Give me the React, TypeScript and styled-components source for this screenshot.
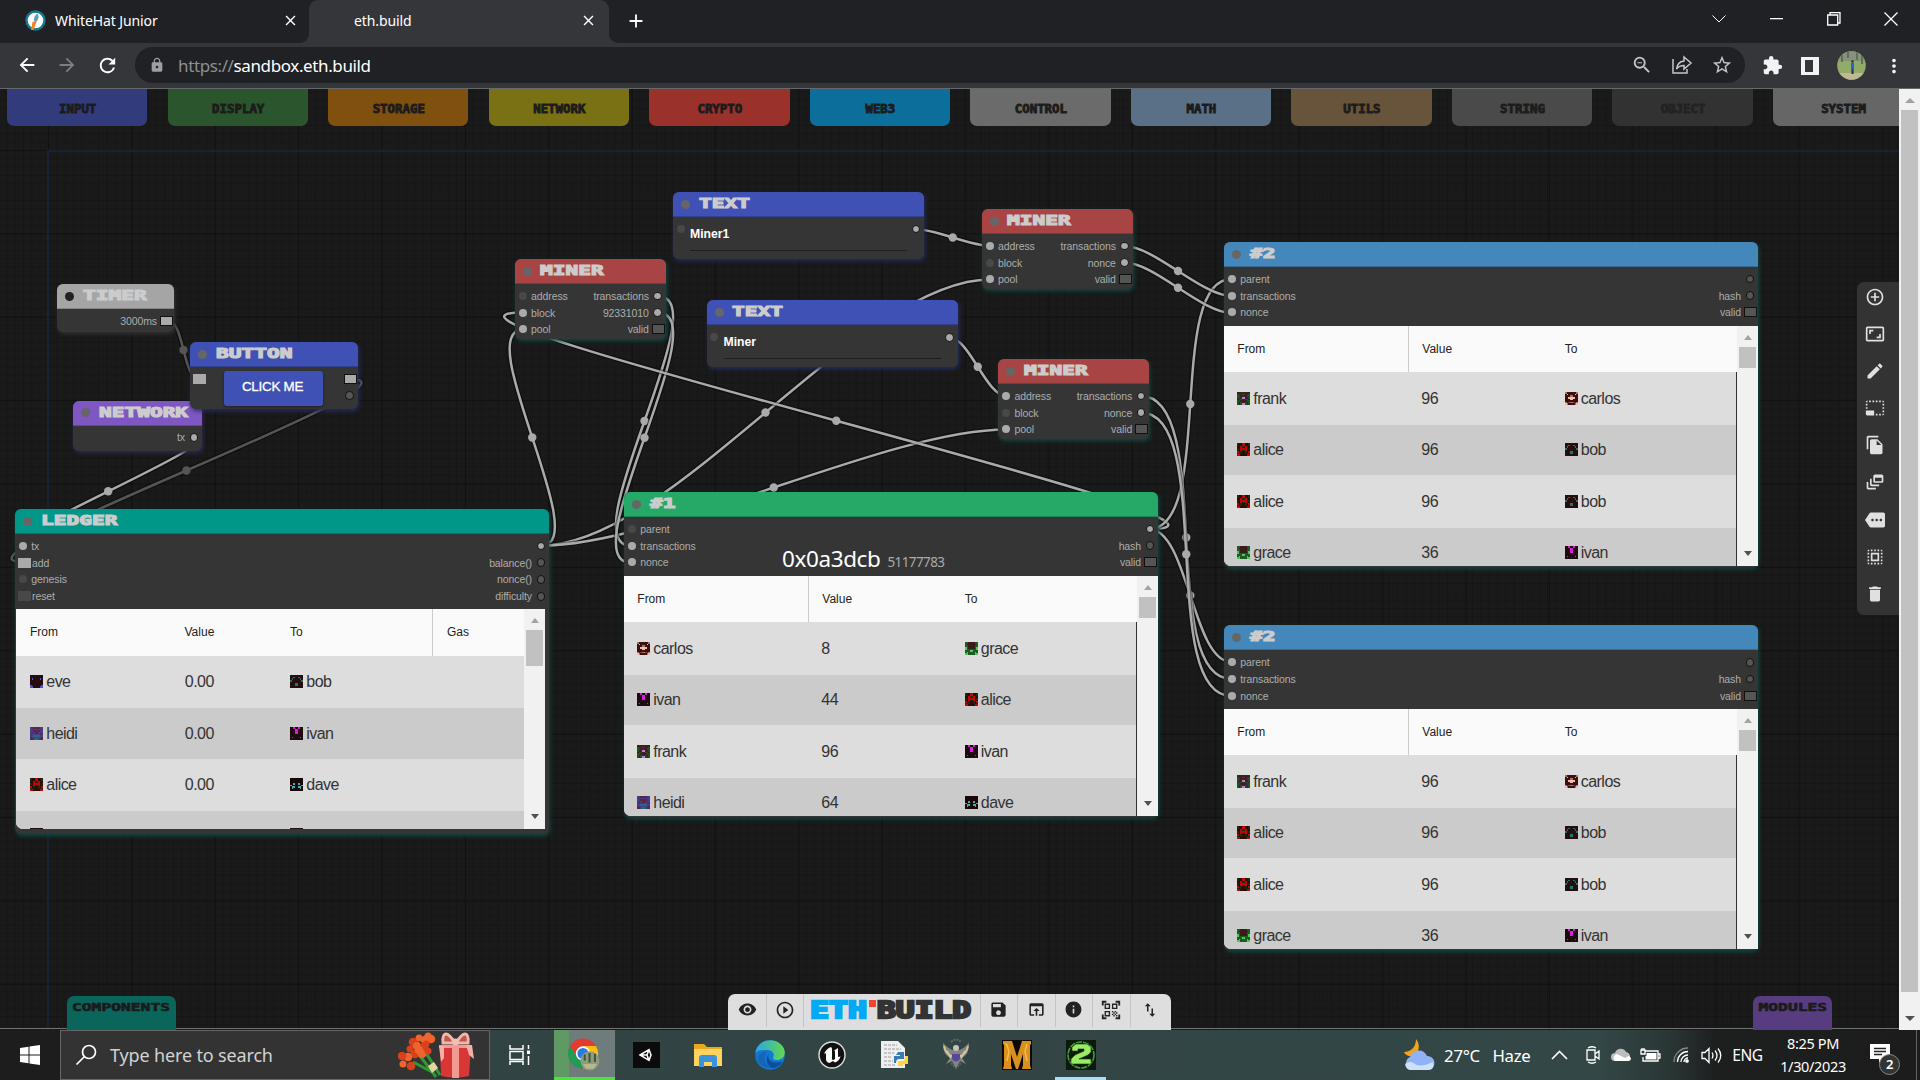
import React from "react";
import styled, { createGlobalStyle } from "styled-components";
import {
  MdAddCircleOutline, MdAspectRatio, MdEdit, MdPhotoSizeSelectSmall, MdFileCopy, MdDynamicFeed,
  MdMore, MdSelectAll, MdDelete, MdRemoveRedEye, MdPlayCircleOutline, MdSave, MdOpenInBrowser,
  MdInfo, MdQrCodeScanner, MdImportExport, MdLock, MdExtension, MdStarOutline, MdRefresh,
  MdArrowBack, MdArrowForward, MdMoreVert, MdClose, MdAdd, MdZoomOut,
} from "react-icons/md";

const Global = createGlobalStyle`
  html, body { margin: 0; padding: 0; background: #1a1a1a; overflow: hidden; }
  * { box-sizing: border-box; }
  svg { display: block; flex: none; }
`;

const ui = `"Noto Sans", "Open Sans", sans-serif`;
const arial = `"Liberation Sans", Arial, sans-serif`;
const mono = `"DejaVu Sans Mono", monospace`;

const Screen = styled.div`
  width: 1920px; height: 1080px; display: grid; grid-template-rows: 89px 941px 50px;
  overflow: hidden; font-family: ${ui}; color: #fff;
`;

/* ---------- browser frame ---------- */
const Browser = styled.header`
  display: grid; grid-template-rows: 43px 45px; background: #35363a; border-bottom: 1px solid #66686b;
`;
const TabStrip = styled.div`display: flex; background: #35363a; height: 43px;`;
const Tab = styled.div<{ $active?: boolean }>`
  width: ${p => (p.$active ? 300 : 309)}px; height: 43px; display: flex; align-items: center;
  padding: 0 ${p => (p.$active ? 12 : 10)}px 2px ${p => (p.$active ? 36 : 25)}px;
  background: ${p => (p.$active ? "#35363a" : "#202124")};
  border-radius: ${p => (p.$active ? "9px 9px 0 0" : "0 0 9px 0")};
  font-size: 14px; letter-spacing: -0.1px;
`;
const ActiveBack = styled.div`background: linear-gradient(#202124 50%, #35363a 50%); display: flex;`;
const TabTitle = styled.span`flex: 1; margin-left: 9px; white-space: nowrap;`;
const StripEnd = styled.div`
  flex: 1; display: flex; padding: 10px 0 0 16px; border-radius: 0 0 0 9px; background: #202124;
`;
const WindowButtons = styled.div`
  margin-left: auto; display: flex; margin-top: -10px; height: 37px; padding-right: 1px;
`;
const WinBtn = styled.div`width: 57.5px; display: grid; place-items: center;`;
const Toolbar = styled.div`display: flex; align-items: center; padding: 0 16px 0 16px;`;
const NavGroup = styled.div`display: flex; gap: 18px; width: 119px;`;
const Omnibox = styled.div`
  width: 1610px; height: 36px; border-radius: 18px; background: #202124; display: flex;
  align-items: center; padding: 0 12px 0 14px; margin-top: -1px; font-size: 17px; color: #fff;
`;
const Url = styled.span`margin-left: 13px; letter-spacing: -0.38px; i { font-style: normal; color: #8c8f93; }`;
const OmniIcons = styled.div`margin-left: auto; display: flex; gap: 18px; color: #c3c6ca;`;
const ExtIcons = styled.div`display: flex; align-items: center; gap: 17px; margin-left: 17px; color: #f1f3f4;`;

/* ---------- page ---------- */
const Viewport = styled.main`display: grid; grid-template-columns: 1899px 21px; height: 941px;`;
const Board = styled.div`
  position: relative; overflow: hidden; background-color: #1a1a1a;
  background-image:
    linear-gradient(90deg, #111 1.4px, transparent 1.4px), linear-gradient(#111 1.4px, transparent 1.4px),
    linear-gradient(90deg, #161616 1px, transparent 1px), linear-gradient(#161616 1px, transparent 1px);
  background-size: 83.4px 83.4px, 83.4px 83.4px, 8.34px 8.34px, 8.34px 8.34px;
  background-position: 48px 61px;
`;
const Frame = styled.div`
  position: absolute; left: 47px; top: 61px; right: 0; bottom: 0;
  border-left: 2px solid #1b253f; border-top: 2px solid #1b253f; opacity: .8;
`;
const Categories = styled.nav`
  position: absolute; left: 7px; top: 0; display: flex; gap: 20.15px;
`;
const Category = styled.div<{ $c: string; $dim?: boolean }>`
  width: 140.4px; height: 37px; flex: none; border-radius: 0 0 7px 7px; background: ${p => p.$c};
  display: grid; place-items: center; padding: 2px 0 0 1px;
  color: ${p => (p.$dim ? "#222" : "#1c1c1c")}; font: 700 12.4px ${mono};
  -webkit-text-stroke: 0.9px ${p => (p.$dim ? "#222" : "#1c1c1c")};
`;
const Wires = styled.svg`position: absolute; left: 0; top: 0;`;

const NodeBox = styled.section<{ $x: number; $y: number; $w: number; $h: number; $glow: string }>`
  position: absolute; left: ${p => p.$x}px; top: ${p => p.$y - 89}px; width: ${p => p.$w}px; height: ${p => p.$h}px;
  background: #353535; border-radius: 6px; box-shadow: 1px 2px 4px ${p => p.$glow}; font-family: ${arial};
`;
const NodeHead = styled.div<{ $c: string }>`
  height: 25px; background: ${p => p.$c}; border-radius: 6px 6px 0 0; display: flex; align-items: center;
  padding-left: 8px; border-bottom: 1px solid rgba(0,0,0,.2);
`;
const HeadDot = styled.i<{ $c?: string }>`width: 9px; height: 9px; border-radius: 50%; background: ${p => p.$c || "#666"};`;
const NodeTitle = styled.b`
  margin-left: 8.5px; margin-top: -2px; font: 700 14px/22px ${mono}; color: #ccc; transform: scaleX(1.51); transform-origin: 0 50%;
  -webkit-text-stroke: 1.15px #ccc; white-space: nowrap;
`;
const Ports = styled.div<{ $h?: number }>`
  display: flex; justify-content: space-between; padding-top: 3.5px; height: ${p => (p.$h ? p.$h + "px" : "auto")};
`;
const PortCol = styled.div<{ $right?: boolean }>`
  display: flex; flex-direction: column; align-items: ${p => (p.$right ? "flex-end" : "flex-start")};
`;
const Port = styled.div<{ $right?: boolean; $box?: boolean }>`
  height: 16.8px; display: flex; align-items: center; flex-direction: ${p => (p.$right ? "row-reverse" : "row")};
  gap: ${p => (p.$box ? (p.$right ? 3 : 1) : 4.5)}px;
  padding: 0 ${p => (p.$right ? (p.$box ? 1 : 4) : 0)}px 0 ${p => (p.$right ? 0 : p.$box ? 3 : 3.8)}px;
  font-size: 10.5px; letter-spacing: -0.1px; color: #adadad; white-space: nowrap;
`;
const Pin = styled.i<{ $on?: boolean; $box?: boolean; $right?: boolean }>`
  width: ${p => (p.$box ? 13 : p.$right ? 8.5 : 8)}px; height: ${p => (p.$box ? 10 : p.$right ? 8.5 : 8)}px;
  border-radius: ${p => (p.$box ? 0 : "50%")}; flex: none;
  background: ${p => (p.$on ? "#aaa" : p.$right ? "#555" : "#484848")};
  border: ${p => (p.$right ? "1.5px solid #111" : "none")};
`;

const TableWrap = styled.div<{ $h: number; $l?: number; $w: number }>`
  height: ${p => p.$h}px; width: ${p => p.$w}px; margin-left: ${p => p.$l || 0}px; display: grid;
  grid-template-columns: 1fr 21px; overflow: hidden; border-radius: 0 0 0 7px; background: #f1f1f1;
`;
const TableBody = styled.div`overflow: hidden; color: #333;`;
const HeadRow = styled.div<{ $cols: string; $h: number }>`
  display: grid; grid-template-columns: ${p => p.$cols}; height: ${p => p.$h}px; background: #fafafa;
  font-size: 12px; color: #222; line-height: ${p => p.$h}px;
`;
const HeadCell = styled.div<{ $line?: boolean; $edge?: boolean }>`
  padding-left: ${p => (p.$edge ? 13.3 : 14)}px; border-left: ${p => (p.$line ? "1px solid #ccc" : "none")};
`;
const Row = styled.div<{ $cols: string; $h: number; $odd: boolean; $edge: boolean }>`
  display: grid; grid-template-columns: ${p => p.$cols}; height: ${p => p.$h}px; align-items: center;
  background: ${p => (p.$odd ? "#cbcbcb" : "#ddd")}; font-size: 16px; letter-spacing: -0.55px; color: #333;
  border-right: ${p => (p.$edge ? "1px solid #333" : "none")};
`;
const Cell = styled.div<{ $edge?: boolean }>`
  padding-left: ${p => (p.$edge ? 13.3 : 14.3)}px; display: flex; align-items: center; gap: 3px;
  svg { margin-top: -1px; }
`;
const Scroll = styled.div<{ $thumb: number }>`
  background: #f1f1f1; display: flex; flex-direction: column; align-items: center; padding: 9px 0 10px;
  &::before { content: ""; border: 4.5px solid transparent; border-top: 0; border-bottom: 5px solid #a3a3a3; }
  &::after { content: ""; border: 4.5px solid transparent; border-bottom: 0; border-top: 5px solid #505050; margin-top: auto; }
  i { width: 17px; height: ${p => p.$thumb}px; background: #c1c1c1; margin-top: 7px; }
`;
const HashLabel = styled.div`
  position: absolute; left: 158px; top: 50px; display: flex; align-items: baseline; gap: 7px; font-family: ${ui};
  font-size: 22.5px; letter-spacing: -0.4px; color: #fff; line-height: 34px; white-space: nowrap;
  small { font-size: 13.5px; color: #aaa; letter-spacing: -0.6px; }
`;
const TextField = styled.div`
  position: absolute; left: 17px; top: 31px; width: 217px; height: 28px; border-bottom: 1.5px solid #1f1f1f;
  color: #fff; font: 700 12.2px/22px ${arial};
`;
const ClickButton = styled.button`
  position: absolute; left: 34px; top: 29px; width: 99px; height: 35px; border: 0; border-radius: 3px; background: #3f51b5;
  color: #fff; font: 500 13.4px ${arial}; letter-spacing: -0.25px; padding: 0 2px 5px 0; -webkit-text-stroke: .3px #fff; box-shadow: 0 1px 3px #0006;
`;
const ToolRail = styled.aside`
  position: absolute; right: 0; top: 193px; width: 42px; height: 333px; background: #333; border-radius: 7px 0 0 7px;
  display: flex; flex-direction: column; align-items: center; padding: 5px 7px 0 0; gap: 17.1px; color: #e0e0e0; font-size: 20px;
`;
const BottomTab = styled.div<{ $l: number; $w: number; $c: string }>`
  position: absolute; left: ${p => p.$l}px; bottom: 0; width: ${p => p.$w}px; height: 34px; background: ${p => p.$c};
  border-radius: 7px 7px 0 0; font: 700 11.3px/24px ${mono}; display: flex; justify-content: center; color: #1b1b1b;
  -webkit-text-stroke: .6px #1b1b1b; span { display: block; transform: scaleX(1.44); }
`;
const Edge = styled.div`position: absolute; left: 0; right: 0; bottom: 1px; height: 1px; background: #727272;`;
const Dock = styled.div`
  position: absolute; left: 728px; bottom: 0; width: 443px; height: 36px; background: #dedede;
  border-radius: 7px 7px 0 0; display: flex; color: #222; font-size: 19px;
`;
const DockItem = styled.div<{ $w: number }>`
  width: ${p => p.$w}px; height: 33px; display: grid; place-items: center; padding-bottom: 2px;
  & + & { border-left: 1px solid #c4c4c4; }
`;
const Logo = styled.div`
  width: 163px; height: 25px; display: flex; justify-content: flex-start; font: 700 23px/25px ${mono}; margin-top: 1px;
  span { display: inline-block; width: 57.5px; color: #03a9f4; -webkit-text-stroke: 2.3px #03a9f4; transform: scaleX(1.37); transform-origin: 0 0; }
  i { width: 7px; height: 7px; background: #f44336; margin: 2px 1px 0 1px; position: relative; z-index: 1; }
  b { width: 93px; color: #333; -webkit-text-stroke: 2.3px #333; transform: scaleX(1.36); transform-origin: 0 0; }
`;
const PageScroll = styled.div`
  background: #f1f1f1; display: flex; flex-direction: column; align-items: center; padding: 9px 0 9px; width: 21px;
  &::before { content: ""; border: 5px solid transparent; border-top: 0; border-bottom: 5px solid #a0a0a0; }
  &::after { content: ""; border: 5px solid transparent; border-bottom: 0; border-top: 5px solid #505050; margin-top: auto; }
  i { width: 17px; height: 882px; background: #c1c1c1; margin-top: 7px; }
`;

/* ---------- taskbar ---------- */
const Taskbar = styled.footer`
  height: 50px; display: flex; background: linear-gradient(90deg, #1d1d1d 60px, #314443 490px, #334746 1600px, #2a3635 1670px, #1d1f1f 1715px, #1c1c1c);
`;
const Start = styled.div`width: 60px; display: grid; place-items: center;`;
const SearchBox = styled.div`
  width: 430px; border: 1px solid #666; background: #333; display: flex; align-items: center; padding-left: 14px;
  font-size: 18px; color: #d2d2d2; span { margin-left: 13px; width: 288px; white-space: nowrap; letter-spacing: -0.15px; }
`;
const TaskItem = styled.div<{ $w: number; $bar?: string; $bg?: string }>`
  width: ${p => p.$w}px; display: grid; place-items: center; background: ${p => p.$bg || "none"};
  box-shadow: ${p => (p.$bar ? `inset 0 -3px ${p.$bar}` : "none")};
`;
const Tray = styled.div`
  margin-left: auto; display: flex; align-items: center; font-size: 16.8px; letter-spacing: -0.3px; white-space: nowrap; width: 518px;
`;
const Slot = styled.div<{ $w: number }>`width: ${p => p.$w}px; flex: none; display: flex; justify-content: center; align-items: center;`;
const Eng = styled.span`font-size: 15.5px; letter-spacing: -0.4px;`;
const Clock = styled.div`
  width: 84px; flex: none; text-align: center; font-size: 14.5px; line-height: 23px; letter-spacing: -0.35px; margin-left: -3px;
`;
const Notice = styled.div`
  width: 46px; display: flex; justify-content: center; position: relative; margin-left: 2px; height: 50px; padding-top: 14px;
  b { position: absolute; left: 22px; top: 24px; width: 21px; height: 21px; border: 1px solid #888; border-radius: 50%;
    background: #333; font-size: 13px; font-weight: 600; text-align: center; line-height: 19px; }
`;
const ShowDesktop = styled.i`width: 1px; height: 50px; background: #666; margin-left: 13px;`;

type Link = [number, number, number, number, boolean?];
const links: Link[] = [
  [168, 321, 199, 379, true], [350, 379, 23, 562, true], [193, 437, 23.4, 545.6],
  [541, 545.6, 523.5, 329.5], [541, 545.6, 990, 279.5], [541, 545.6, 1006.5, 429.5],
  [657.5, 296, 631.5, 546], [657.5, 312.5, 631.5, 563], [1149, 529, 523.5, 312.5],
  [1149, 529, 1231.5, 279], [1149, 529, 1231.5, 662], [1124.5, 246, 1231.5, 296], [1124.5, 262.5, 1231.5, 313],
  [1141, 396, 1231.5, 679], [1141, 412.5, 1231.5, 696], [915.5, 229, 990, 246], [949, 337.5, 1006.5, 396],
];

const WireLayer = () => (
  <Wires width="1899" height="941" viewBox="0 89 1899 941" fill="none">
    {links.map(([x1, y1, x2, y2, dim], i) => {
      const d = Math.hypot(x2 - x1, y2 - y1) * 0.25;
      const path = `M${x1} ${y1}C${x1 + d} ${y1} ${x2 - d} ${y2} ${x2} ${y2}`;
      const c = dim ? "#555" : "#aaa";
      return (
        <g key={i}>
          <path d={path} stroke="#000" strokeOpacity=".4" strokeWidth="5" />
          <path d={path} stroke={c} strokeWidth="2.500" />
          <circle cx={(x1 + x2) / 2} cy={(y1 + y2) / 2} r="4.2" fill={c} />
        </g>
      );
    })}
  </Wires>
);

const faces: Record<string, { p: string[]; c: Record<string, string> }> = {
  ivan: { p: ["..a.", "...a", "...a", "...a", "....", "....", ".a..", "...."], c: { ".": "#1f0a12", a: "#d61ed6" } },
  alice: { p: ["b..a", "b..a", "..ab", "b.aa", "..ab", "a.b.", "b.b.", "aa.."], c: { ".": "#2a0c06", a: "#c40404", b: "#1d2a12" } },
  grace: { p: ["..bb", ".bbb", "..bb", "a.bb", "a...", "...a", ".a..", "aa.."], c: { ".": "#1d5a26", a: "#44cf50", b: "#3a1a1a" } },
  dave: { p: ["....", "....", "....", "..a.", "a...", ".aa.", ".a..", "...."], c: { ".": "#180909", a: "#4aa8b0" } },
  bob: { p: ["....", "..a.", ".a..", "a...", "....", "...a", "...a", "...."], c: { ".": "#260d0e", a: "#1f766c" } },
  eve: { p: ["....", "....", ".a..", "....", "....", "....", "a...", "aa.."], c: { ".": "#260c0c", a: "#4a57c8" } },
  heidi: { p: ["..bb", ".b..", "..bb", ".b.b", "b...", "..aa", "b...", "bb.a"], c: { ".": "#463c8c", a: "#276a78", b: "#5c2448" } },
  frank: { p: ["bbbb", ".bb.", "..bb", ".bba", "b..b", "..bb", ".b.b", ".b.a"], c: { ".": "#1d5220", a: "#c27ae0", b: "#3c2022" } },
  carlos: { p: ["c...", ".a..", "...c", "..aa", "...a", "....", "c.bc", "ac.."], c: { ".": "#3c0f10", a: "#f0bcae", b: "#7c3f38", c: "#b07468" } },
};
const Face = ({ n }: { n: string }) => (
  <svg width="13" height="13" viewBox="0 0 8 8" shapeRendering="crispEdges">
    {faces[n].p.map((r, y) => (r + [...r].reverse().join("")).split("").map((k, x) => (
      <rect key={`${x}-${y}`} x={x} y={y} width="1" height="1" fill={faces[n].c[k]} />
    )))}
  </svg>
);

type PortDef = { t?: string; on?: boolean; box?: boolean };
const PortList = ({ items, right }: { items: PortDef[]; right?: boolean }) => (
  <PortCol $right={right}>
    {items.map((p, i) => (
      <Port key={i} $right={right} $box={p.box}>
        <Pin $on={p.on} $box={p.box} $right={right} />
        <span>{p.t}</span>
      </Port>
    ))}
  </PortCol>
);

type NodeProps = {
  x: number; y: number; w: number; h: number; title: string; color: string; glow?: string; dot?: string;
  left?: PortDef[]; right?: PortDef[]; portsH?: number; children?: React.ReactNode;
};
const GraphNode = ({ x, y, w, h, title, color, glow = "#0f4a45", dot, left = [], right = [], portsH, children }: NodeProps) => (
  <NodeBox $x={x} $y={y} $w={w} $h={h} $glow={glow}>
    <NodeHead $c={color}><HeadDot $c={dot} /><NodeTitle>{title}</NodeTitle></NodeHead>
    <Ports $h={portsH}><PortList items={left} /><PortList items={right} right /></Ports>
    {children}
  </NodeBox>
);

type TxTableProps = { cols: string; heads: string[]; line: number; rows: string[][]; heights: number[]; headH: number; thumb: number; w: number; h: number; l?: number; edge?: boolean };
const TxTable = ({ cols, heads, line, rows, heights, headH, thumb, w, h, l, edge = false }: TxTableProps) => (
  <TableWrap $w={w} $h={h} $l={l}>
    <TableBody>
      <HeadRow $cols={cols} $h={headH}>{heads.map((t, i) => <HeadCell key={t} $edge={edge} $line={i === line}>{t}</HeadCell>)}</HeadRow>
      {rows.map(([a, v, b], i) => (
        <Row key={i} $cols={cols} $h={heights[i]} $odd={i % 2 === 1} $edge={edge}>
          <Cell $edge={edge}><Face n={a} />{v && a}</Cell>
          <Cell $edge={edge}>{v}</Cell>
          <Cell $edge={edge}><Face n={b} />{v && b}</Cell>
        </Row>
      ))}
    </TableBody>
    <Scroll $thumb={thumb}><i /></Scroll>
  </TableWrap>
);

const Miner = ({ x, y, first }: { x: number; y: number; first?: boolean }) => (
  <GraphNode x={x} y={y} w={151} h={80} title="MINER" color="#a94444"
    left={[{ t: "address", on: !first }, { t: "block", on: first }, { t: "pool", on: true }]}
    right={[{ t: "transactions", on: true }, { t: first ? "92331010" : "nonce", on: true }, { t: "valid", box: true }]} />
);
const TextNode = ({ x, y, value }: { x: number; y: number; value: string }) => (
  <GraphNode x={x} y={y} w={251} h={67} title="TEXT" color="#3f51b5" glow="#252d66" left={[{}]} right={[{ on: true }]}>
    <TextField>{value}</TextField>
  </GraphNode>
);
const Block = ({ x, y, n, color, rows, children }: { x: number; y: number; n: string; color: string; rows: string[][]; children?: React.ReactNode }) => (
  <GraphNode x={x} y={y} w={534} h={325} title={n} color={color} portsH={59}
    left={[{ t: "parent", on: n !== "#1" }, { t: "transactions", on: true }, { t: "nonce", on: true }]}
    right={[{ on: n === "#1" }, { t: "hash" }, { t: "valid", box: true }]}>
    {children}
    <TxTable cols="184px 143.500px 1fr" heads={["From", "Value", "To"]} line={1} rows={rows} heights={[53, 50, 53, 49]}
      headH={46} thumb={21} w={534} h={240} edge />
  </GraphNode>
);

const categories: [string, string][] = [
  ["INPUT", "#323c7c"], ["DISPLAY", "#2b552d"], ["STORAGE", "#80500f"], ["NETWORK", "#7a7014"], ["CRYPTO", "#9b312b"],
  ["WEB3", "#0c6e9b"], ["CONTROL", "#6b6b6b"], ["MATH", "#5a7087"], ["UTILS", "#68533b"], ["STRING", "#4a4a4a"],
  ["OBJECT", "#323232"], ["SYSTEM", "#666"],
];
const secondRows = [["frank", "96", "carlos"], ["alice", "96", "bob"], ["alice", "96", "bob"], ["grace", "36", "ivan"]];

/* ---------- drawings ---------- */
const Rocket = () => (
  <svg width="21" height="21" viewBox="0 0 21 21"><circle cx="10.500" cy="10.500" r="9" fill="#fff" stroke="#16798f" strokeWidth="2.400" />
    <path d="M12.500 3.500c1.800 2.400 1.400 5-.3 7.500H9c-.6-3 .8-6 3.500-7.500z" fill="#5ba3b5" /><path d="M7.500 12 12 10.500 8.500 20H6z" fill="#f58220" /></svg>
);
const Portrait = () => (
  <svg width="29" height="29" viewBox="0 0 29 29"><defs><clipPath id="pc"><circle cx="14.500" cy="14.500" r="14.300" /></clipPath></defs>
    <g clipPath="url(#pc)"><path fill="#93ab68" d="M0 0h29v29H0z" /><path fill="#87917f" d="M0 0h29v10H0z" /><path d="M5 0v11M11 0v7M20 0v9M25 0v13" stroke="#5b7450" strokeWidth="2" />
      <path fill="#bfb996" d="M0 22h29v7H0z" /><path d="M15.500 12v6" stroke="#2365c8" strokeWidth="3" /><path d="M15.500 18v5" stroke="#3a3440" strokeWidth="2.200" /><circle cx="15.500" cy="10.500" r="1.400" fill="#443" /></g></svg>
);
const Share = () => (
  <svg width="22" height="22" viewBox="0 0 22 22" fill="none" stroke="#c3c6ca" strokeWidth="1.500"><path d="M2 5v14h14v-4" /><path d="M13 3l7 6-7 6v-3.500c-3 0-5.500.8-7.500 3.500.6-4.500 3.500-7.500 7.500-8z" /></svg>
);
const Flowers = () => (
  <svg width="76" height="48" viewBox="0 0 76 48">
    <g stroke="#2f9a35" strokeWidth="3" fill="none"><path d="M22 25 38 46M28 22 42 44M15 31 36 42" /></g><path d="M30 35l6-4 4 6-6 5z" fill="#e7d3a0" />
    <g fill="#e8511f">{[[21, 7], [15, 11], [27, 9], [12, 18], [19, 15], [26, 16], [30, 5], [17, 23], [24, 23], [30, 20], [10, 26], [4, 25], [5, 33], [13, 35], [33, 8], [28, 13], [21, 19]].map(([a, b], i) => <circle key={i} cx={a} cy={b} r={i % 3 ? 4.3 : 3.500} fill={i % 2 ? "#d8411a" : "#f0632c"} />)}</g>
    <path d="M42 16h31l-2 29q-14 3-28 0z" fill="#d93636" /><path d="M54 16h7v31h-7zM41 14h33v3H41z" fill="#f19a92" /><path d="M41 15h5v12l-3 4zM68 14h6l2 14-5-4z" fill="#f4b0a8" />
    <path d="M57 12C49-1 44 1 45 12zM58 12C66-1 71 1 70 12z" fill="#b85a50" stroke="#f5b5aa" strokeWidth="3" /><circle cx="57.500" cy="11" r="3.500" fill="#f7bdb2" />
  </svg>
);
const Chrome = () => (
  <svg width="33" height="34" viewBox="0 0 33 34"><circle cx="15" cy="15.500" r="15" fill="#e33b2e" /><path d="M2 8A15 15 0 0 0 15 30.500L21 19l-12 0z" fill="#1f9d55" /><path d="M15 8h13a15 15 0 0 1-13 22.500l6.500-12z" fill="#fbbc16" />
    <circle cx="15" cy="15.500" r="7.200" fill="#fff" /><circle cx="15" cy="15.500" r="5.600" fill="#2a7de1" /><g transform="translate(12 13) scale(.68)"><circle cx="14.500" cy="14.500" r="14" fill="#8c9c7c" /><path d="M7 5v9M14 3v14M22 4v12" stroke="#3f5540" strokeWidth="3" /><path d="M4 19h21l-5 7H9z" fill="#b7b98c" /></g></svg>
);
const UnityIcon = () => <svg width="27" height="26" viewBox="0 0 27 26"><path fill="#0b0b0b" d="M0 0h27v26H0z" /><path d="M7 13l9-5.500L18 13l-2 5.500zM7 13h7l2-5.500M14 13l2 5.500" stroke="#fff" strokeWidth="1.500" fill="none" /></svg>;
const FolderIcon = () => <svg width="28" height="25" viewBox="0 0 28 25"><path d="M0 1h10l3 3h15v19H0z" fill="#e9a91c" /><path d="M0 6h28v17H0z" fill="#ffd45e" /><path d="M5 24V15q0-3 3-3h12q3 0 3 3v9h-5v-5h-8v5z" fill="#3b93dc" /></svg>;
const EdgeIcon = () => (
  <svg width="30" height="30" viewBox="0 0 30 30"><defs><linearGradient id="eg"><stop offset="0" stopColor="#2aa6e8" /><stop offset="1" stopColor="#62d84e" /></linearGradient></defs>
    <circle cx="15" cy="15" r="14.800" fill="#1477d4" /><path d="M.3 13C1.500 5 8 .2 15 .2c9 0 15 6.500 14.800 12.500-.2 5-4 7.300-8 7.300-3 0-4.500-1.200-3.500-3 1.500-3-.8-7-6-7C7 10 2 10.500.3 13z" fill="url(#eg)" /><path d="M12 12c-4 4-3 12 4 15-7 3-13-3-13-9 0-4 5-7 9-6z" fill="#1566b8" /><path d="M14 13c-3 6 3 11 11 9 1 0 2-1 2 0-2 4-6 6-10 6-6-3-7-10-3-15z" fill="#0c4fa0" /></svg>
);
const UnrealIcon = () => <svg width="28" height="28" viewBox="0 0 28 28"><circle cx="14" cy="14" r="13" fill="#111" stroke="#ddd" strokeWidth="1.400" /><path d="M13 6c-3 1-6 4-7 7 1-1 2-1 2 .5V18c0 2 1 3.500 3.500 4L15 20l2 1.500c3-1 5-3.500 5.500-6.500-1 1-2.500 1.500-2.500 0V7l-4 2.500c1 .2 1 .7 1 1.500v7l-1.500 1c-1 0-1.500-.5-1.500-1.500V9c0-1 0-2-1-3z" fill="#fff" /></svg>;
const PythonIcon = () => <svg width="29" height="29" viewBox="0 0 29 29"><path d="M1 0h17l7 7v20H1z" fill="#eee" /><path d="M4 4h13M4 8h17M4 12h10M4 16h8M4 20h9M4 24h11" stroke="#b9b9b9" strokeWidth="1.300" strokeDasharray="3 1" /><path d="M18 11h6v7h-5q-3 0-3 4h-2v-7h6v-1h-4z" fill="#3b7bb0" /><path d="M25 15h3v8h-5v2h-5v-5h6q1-1 1-5z" fill="#ffd43b" /></svg>;
const EagleIcon = () => (
  <svg width="28" height="32" viewBox="0 0 28 32"><path d="M14 11C10 12 6 9 1 4c0 8 2 12 7 15l-4 6 6-3 4 8 4-8 6 3-4-6c5-3 7-7 7-15-5 5-9 8-13 7z" fill="#85857f" />
    <path d="M2 7c1 5 4 9 8 10M26 7c-1 5-4 9-8 10M5 12l4 7M23 12l-4 7" stroke="#cfc49a" strokeWidth="1.800" fill="none" /><path d="M10 15h8v5q-4 5-8 0z" fill="#54489a" /><circle cx="14" cy="9" r="3" fill="#c5c5c0" /><path d="M9 3q5-5 10 0M9 24l5 5 5-5" stroke="#666" strokeWidth="1.800" fill="none" strokeDasharray="2 1" /></svg>
);
const MIcon = () => <svg width="30" height="30" viewBox="0 0 30 30"><path fill="#0d0a06" d="M0 0h30v30H0z" /><path d="M1 1h9l5 16 5-16h9v3l-1 1v20l1 4h-9l1-4V14l-5 15h-2L9 14v11l1 4H1l1-4V5L1 4z" fill="#d9901f" /><path d="M4 3l3 8-2 10M25 4l-2 7 2 10" stroke="#f6bf4b" strokeWidth="1.500" fill="none" /></svg>;
const TwoIcon = () => <svg width="30" height="30" viewBox="0 0 30 30"><path fill="#0c1a0c" d="M0 0h30v30H0z" /><circle cx="15" cy="15" r="13" fill="none" stroke="#4a9a3c" strokeWidth="1.600" strokeDasharray="6 1" /><path d="M6 11V7l4-3h11l4 3v5l-3 3-9 4h12v5H5v-5l4-4 9-4V9h-6v2z" fill="#98ec62" stroke="#17341a" strokeWidth=".6" /></svg>;
const Weather = () => <svg width="32" height="32" viewBox="0 0 32 32"><path d="M13 0c5 6 3 14-3 17C6 18 2 16 1 13 8 13 13 8 13 0z" fill="#f5a31d" /><path d="M8 31a7 7 0 0 1-1-13 9 9 0 0 1 17-1 7 7 0 0 1 1 14z" fill="#8fb3f5" /><path d="M2 25q5-4 10 0t18-2q2 8-5 8H8q-5 0-6-6z" fill="#cfe0fd" /></svg>;
const line = { fill: "none", stroke: "#fff", strokeWidth: 1.3 } as const;

export default function App() {
  return (
    <Screen>
      <Global />
      <Browser>
        <TabStrip>
          <Tab><Rocket /><TabTitle>WhiteHat Junior</TabTitle><MdClose size={17} /></Tab>
          <ActiveBack><Tab $active><TabTitle>eth.build</TabTitle><MdClose size={17} /></Tab></ActiveBack>
          <StripEnd>
            <MdAdd size={22} />
            <WindowButtons>
              <WinBtn><svg width="14" height="8" {...line} strokeWidth={1}><path d="M.5.500 7 7 13.500.500" /></svg></WinBtn>
              <WinBtn><svg width="13" height="2"><path fill="#fff" d="M0 0h13v1.300H0z" /></svg></WinBtn>
              <WinBtn><svg width="14" height="14" {...line}><path d="M.7 3h10v10h-10zM3 3V.7h10V11h-2" /></svg></WinBtn>
              <WinBtn><svg width="14" height="14" {...line}><path d="m.5.500 13 13m0-13-13 13" /></svg></WinBtn>
            </WindowButtons>
          </StripEnd>
        </TabStrip>
        <Toolbar>
          <NavGroup><MdArrowBack size={22} /><MdArrowForward size={22} color="#7d7e81" /><MdRefresh size={23} /></NavGroup>
          <Omnibox>
            <MdLock size={16} color="#9aa0a6" /><Url><i>https://</i>sandbox.eth.build</Url>
            <OmniIcons><MdZoomOut size={22} /><Share /><MdStarOutline size={22} /></OmniIcons>
          </Omnibox>
          <ExtIcons>
            <MdExtension size={21} />
            <svg width="20" height="18" viewBox="0 0 20 18"><path d="M1 0h18v18H1zM5 3v12h8V3z" fill="#f1f3f4" fillRule="evenodd" /></svg>
            <Portrait /><MdMoreVert size={22} />
          </ExtIcons>
        </Toolbar>
      </Browser>

      <Viewport>
        <Board>
          <Frame />
          <WireLayer />
          <GraphNode x={57} y={284} w={117} h={48} title="TIMER" color="#a5a5a5" glow="#333" dot="#222" right={[{ t: "3000ms", on: true, box: true }]} />
          <GraphNode x={73} y={400.5} w={129} h={50.5} title="NETWORK" color="#7e57c2" glow="#35255a" right={[{ t: "tx", on: true }]} />
          <GraphNode x={190} y={342} w={167.5} h={67} title="BUTTON" color="#3f51b5" glow="#252d66" left={[{ on: true, box: true }]} right={[{ on: true, box: true }, {}]}>
            <ClickButton>CLICK ME</ClickButton>
          </GraphNode>
          <GraphNode x={15} y={509} w={534} h={325} title="LEDGER" color="#009688" portsH={75}
            left={[{ t: "tx", on: true }, { t: "add", on: true, box: true }, { t: "genesis" }, { t: "reset", box: true }]}
            right={[{ on: true }, { t: "balance()" }, { t: "nonce()" }, { t: "difficulty" }]}>
            <TxTable cols="154.5px 105.500px 156px 1fr" heads={["From", "Value", "To", "Gas"]} line={3} l={1} w={529} h={220}
              rows={[["eve", "0.00", "bob"], ["heidi", "0.00", "ivan"], ["alice", "0.00", "dave"], ["bob", "", "bob"]]}
              heights={[52, 51, 52, 48]} headH={47} thumb={36} />
          </GraphNode>
          <Miner x={514.8} y={259} first />
          <TextNode x={673} y={192} value="Miner1" />
          <TextNode x={706.5} y={300.4} value="Miner" />
          <Miner x={981.8} y={209} />
          <Miner x={998.2} y={359} />
          <Block x={624} y={492} n="#1" color="#26a967" rows={[["carlos", "8", "grace"], ["ivan", "44", "alice"], ["frank", "96", "ivan"], ["heidi", "64", "dave"]]}>
            <HashLabel>0x0a3dcb<small>51177783</small></HashLabel>
          </Block>
          <Block x={1224} y={242} n="#2" color="#4488bb" rows={secondRows} />
          <Block x={1224} y={625.4} n="#2" color="#4488bb" rows={secondRows} />

          <Categories>{categories.map(([t, c]) => <Category key={t} $c={c} $dim={t === "OBJECT"}>{t}</Category>)}</Categories>
          <ToolRail>
            <MdAddCircleOutline /><MdAspectRatio /><MdEdit /><MdPhotoSizeSelectSmall /><MdFileCopy />
            <MdDynamicFeed /><MdMore /><MdSelectAll /><MdDelete />
          </ToolRail>
          <Edge />
          <BottomTab $l={67} $w={109} $c="#0a655b"><span>COMPONENTS</span></BottomTab>
          <BottomTab $l={1753} $w={79} $c="#573c80"><span>MODULES</span></BottomTab>
          <Dock>
            <DockItem $w={38}><MdRemoveRedEye /></DockItem>
            <DockItem $w={37}><MdPlayCircleOutline size={20} /></DockItem>
            <DockItem $w={176.5}><Logo><span>ETH</span><i /><b>BUILD</b></Logo></DockItem>
            <DockItem $w={37.5}><MdSave /></DockItem>
            <DockItem $w={37.5}><MdOpenInBrowser /></DockItem>
            <DockItem $w={37.5}><MdInfo /></DockItem>
            <DockItem $w={37.5}><MdQrCodeScanner size={22} /></DockItem>
            <DockItem $w={39}><MdImportExport size={18} /></DockItem>
          </Dock>
        </Board>
        <PageScroll><i /></PageScroll>
      </Viewport>

      <Taskbar>
        <Start><svg width="20" height="20" viewBox="0 0 20 20" fill="#fff"><path d="M0 3l8.500-1.200v7.700H0zM9.500 1.600 20 0v9.500H9.500zM0 10.500h8.500v7.700L0 17zM9.500 10.500H20V20L9.500 18.400z" /></svg></Start>
        <SearchBox>
          <svg width="22" height="22" {...line} strokeWidth={1.7}><circle cx="14" cy="8" r="6.500" /><path d="M9.500 12.500 1.500 20.500" /></svg>
          <span>Type here to search</span><Flowers />
        </SearchBox>
        <TaskItem $w={60}><svg width="22" height="20" {...line} strokeWidth={1.5}><path d="M1 0v4h13V0M1 6.500h13v8H1zM1 20v-3.500h13V20M19.500 0v4M19.500 11v9" /><path d="M18 5.500h3v3.500h-3z" fill="#fff" stroke="none" /></svg></TaskItem>
        <TaskItem $w={4} />
        <TaskItem $w={61} $bar="#4ee23e" $bg="linear-gradient(90deg,#5f9a64 15px,#6f7c7c 15px)"><Chrome /></TaskItem>
        <TaskItem $w={62}><UnityIcon /></TaskItem>
        <TaskItem $w={62}><FolderIcon /></TaskItem>
        <TaskItem $w={62}><EdgeIcon /></TaskItem>
        <TaskItem $w={62}><UnrealIcon /></TaskItem>
        <TaskItem $w={63}><PythonIcon /></TaskItem>
        <TaskItem $w={60}><EagleIcon /></TaskItem>
        <TaskItem $w={62}><MIcon /></TaskItem>
        <TaskItem $w={7} />
        <TaskItem $w={51} $bar="#a9def6"><TwoIcon /></TaskItem>
        <Tray>
          <Slot $w={32}><Weather /></Slot>
          <Slot $w={54}>27°C</Slot>
          <Slot $w={45}>Haze</Slot>
          <Slot $w={50}><svg width="17" height="10" {...line} strokeWidth={1.6}><path d="M1 9l7.500-7.500L16 9" /></svg></Slot>
          <Slot $w={18}><svg width="15" height="18" {...line}><path d="M1 4h8v10H1zM9 8l4-3v8l-4-3M2 2q4-2.500 8 0M2 16q4 2.500 8 0" /></svg></Slot>
          <Slot $w={38}><svg width="21" height="14" fill="#fff"><path d="M4 13a4 4 0 0 1 0-8 6 6 0 0 1 11-1 5 5 0 0 1 2 9z" fill="#bdbdbd" /><path d="M4 13a4 4 0 0 1 2-7l8 4 4-2q4 3 0 5z" /></svg></Slot>
          <Slot $w={21}><svg width="21" height="14" {...line}><path d="M5 3h13v10H3V9M18 6h2v4h-2M1 2h4v4H1zM2 0v2M4 0v2" /><path d="M6.500 5h10v6.500h-11V8h1z" fill="#fff" stroke="none" /></svg></Slot>
          <Slot $w={40}><svg width="16" height="16" {...line}><path d="M1 15A14 14 0 0 1 15 1" stroke="#888" /><path d="M4.500 15A10.500 10.500 0 0 1 15 4.500M8 15a7 7 0 0 1 7-7M11 15a4 4 0 0 1 4-4" /><circle cx="14" cy="14" r="1.200" fill="#fff" /></svg></Slot>
          <Slot $w={20}><svg width="21" height="17" {...line}><path d="M1 5.500h3l4-4v14l-4-4H1zM11 5.500q2 3 0 6M14 3.500q4 5 0 10M17 1.500q5.500 7 0 14" /></svg></Slot>
          <Slot $w={53}><Eng>ENG</Eng></Slot>
          <Clock>8:25 PM<br />1/30/2023</Clock>
          <Notice><svg width="20" height="19" viewBox="0 0 20 19"><path d="M0 0h20v15h-7l-4 4v-4H0z" fill="#fff" /><path d="M4 4.500h12M4 7.500h12M4 10.500h8" stroke="#222" strokeWidth="1.300" /></svg><b>2</b></Notice>
          <ShowDesktop />
        </Tray>
      </Taskbar>
    </Screen>
  );
}
